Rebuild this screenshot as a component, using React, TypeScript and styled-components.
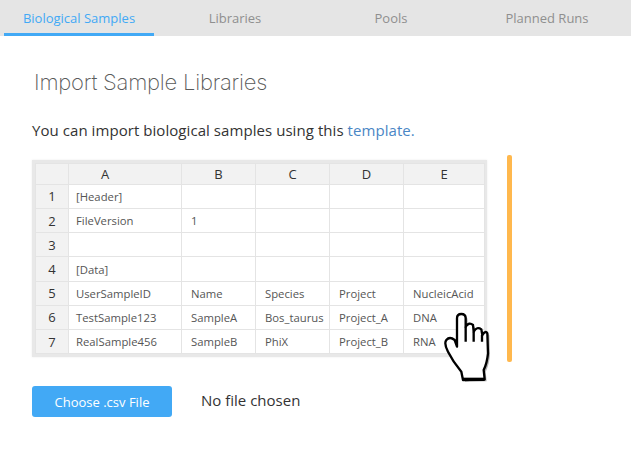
import styled, { createGlobalStyle } from 'styled-components'

const GlobalStyle = createGlobalStyle`
  html, body {
    margin: 0;
    padding: 0;
    background: #fff;
  }
  body {
    font-family: 'Open Sans', 'Noto Sans', sans-serif;
  }
`

const tabs = ['Biological Samples', 'Libraries', 'Pools', 'Planned Runs']

const columns = ['A', 'B', 'C', 'D', 'E']

const rows = [
  ['[Header]', '', '', '', ''],
  ['FileVersion', '1', '', '', ''],
  ['', '', '', '', ''],
  ['[Data]', '', '', '', ''],
  ['UserSampleID', 'Name', 'Species', 'Project', 'NucleicAcid'],
  ['TestSample123', 'SampleA', 'Bos_taurus', 'Project_A', 'DNA'],
  ['RealSample456', 'SampleB', 'PhiX', 'Project_B', 'RNA'],
]

const handPath =
  'M140 150 Q150 138 165 150 L172 170 L172 85 Q172 72 185 72 Q198 72 198 85 L198 110 Q208 95 220 105 L222 125 Q232 108 245 118 L248 135 Q258 120 263 130 L265 190 Q262 220 252 240 L255 268 L190 270 L185 245 Q160 215 145 185 Q132 160 140 150 Z'

function HandCursor() {
  return (
    <Cursor viewBox="130 60 150 225" aria-hidden="true">
      <path d={handPath} fill="#000" opacity="0.3" transform="translate(6 6)" />
      <path d={handPath} fill="#fff" stroke="#000" strokeWidth="7" strokeLinejoin="round" />
      <path d="M198 110 V155 M222 125 V155 M247 135 V155" fill="none" stroke="#000" strokeWidth="7" />
      <path d="M190 268 H255" fill="none" stroke="#000" strokeWidth="10" />
    </Cursor>
  )
}

export default function App() {
  return (
    <>
      <GlobalStyle />
      <TabBar>
        {tabs.map((tab, i) => (
          <Tab key={tab} $active={i === 0}>
            {tab}
          </Tab>
        ))}
      </TabBar>
      <Main>
        <Heading>Import Sample Libraries</Heading>
        <Intro>
          You can import biological samples using this <TemplateLink href="#">template.</TemplateLink>
        </Intro>
        <SheetRow>
          <SheetFrame>
            <Sheet>
              <colgroup>
                <col width="33" />
                <col width="113" />
                <col width="74" />
                <col width="74" />
                <col width="74" />
                <col width="81" />
              </colgroup>
              <thead>
                <tr>
                  <HeadCell />
                  {columns.map((c, i) => (
                    <HeadCell key={c} $first={i === 0}>
                      {c}
                    </HeadCell>
                  ))}
                </tr>
              </thead>
              <tbody>
                {rows.map((row, i) => (
                  <tr key={i}>
                    <RowNumber>{i + 1}</RowNumber>
                    {row.map((value, j) => (
                      <Cell key={j} $first={j === 0}>
                        {value}
                      </Cell>
                    ))}
                  </tr>
                ))}
              </tbody>
            </Sheet>
            <HandCursor />
          </SheetFrame>
          <ScrollBar />
        </SheetRow>
        <UploadRow>
          <ChooseButton>Choose .csv File</ChooseButton>
          <FileStatus>No file chosen</FileStatus>
        </UploadRow>
      </Main>
    </>
  )
}

const TabBar = styled.div`
  display: flex;
  gap: 6px;
  height: 36px;
  padding-left: 4px;
  background-color: #e5e5e5;
`

const Tab = styled.div<{ $active: boolean }>`
  box-sizing: border-box;
  width: 150px;
  height: 36px;
  line-height: 36px;
  text-align: center;
  font-size: 13px;
  color: ${(p) => (p.$active ? '#42a9f5' : '#8f8f8f')};
  border-bottom: 3px solid ${(p) => (p.$active ? '#42a9f5' : 'transparent')};
`

const Main = styled.div`
  padding: 33px 0 0 32px;
`

const Heading = styled.h1`
  margin: 0 0 0 2px;
  font-family: Inter, sans-serif;
  font-size: 22px;
  line-height: 26px;
  letter-spacing: -0.22px;
  font-weight: 200;
  color: #5a5a5a;
`

const Intro = styled.p`
  margin: 25px 0 0;
  font-size: 15px;
  line-height: 20px;
  letter-spacing: 0.06px;
  color: #333;
`

const TemplateLink = styled.a`
  color: #4a86c5;
  text-decoration: none;
`

const SheetRow = styled.div`
  display: flex;
  align-items: center;
  gap: 20px;
  margin-top: 15px;
`

const SheetFrame = styled.div`
  position: relative;
  width: 449px;
  padding: 3px;
  background-color: #e8e8e8;
  box-shadow: 0 0 2px rgba(0, 0, 0, 0.08);
`

const Sheet = styled.table`
  width: 449px;
  table-layout: fixed;
  border-collapse: collapse;
  background-color: #fff;
  font-size: 11.3px;
  color: #555;
`

const HeadCell = styled.th<{ $first?: boolean }>`
  height: 20px;
  padding: 0 ${(p) => (p.$first ? '40px' : '0')} 0 0;
  font-size: 13px;
  font-weight: 400;
  text-align: center;
  color: #333;
  background-color: #f2f2f2;
  border: 1px solid #e4e4e4;
`

const RowNumber = styled.td`
  height: 23.2px;
  padding: 0;
  font-size: 13px;
  text-align: center;
  color: #333;
  background-color: #f2f2f2;
  border: 1px solid #e4e4e4;
`

const Cell = styled.td<{ $first: boolean }>`
  padding: 0 0 0 ${(p) => (p.$first ? '7px' : '9px')};
  white-space: nowrap;
  overflow: hidden;
  border: 1px solid #e4e4e4;
`

const Cursor = styled.svg`
  position: absolute;
  left: 411px;
  top: 150px;
  width: 50px;
  height: 75px;
`

const ScrollBar = styled.div`
  width: 5px;
  height: 207px;
  border-radius: 2px;
  background-color: #ffb84d;
`

const UploadRow = styled.div`
  display: flex;
  align-items: center;
  gap: 29px;
  margin-top: 24px;
`

const ChooseButton = styled.button`
  width: 140px;
  height: 31px;
  padding: 0;
  border: 0;
  border-radius: 3px;
  background-color: #42a9f5;
  color: #fff;
  font-family: inherit;
  font-size: 13px;
  font-weight: 500;
`

const FileStatus = styled.span`
  padding-bottom: 3px;
  font-size: 15px;
  color: #333;
`
